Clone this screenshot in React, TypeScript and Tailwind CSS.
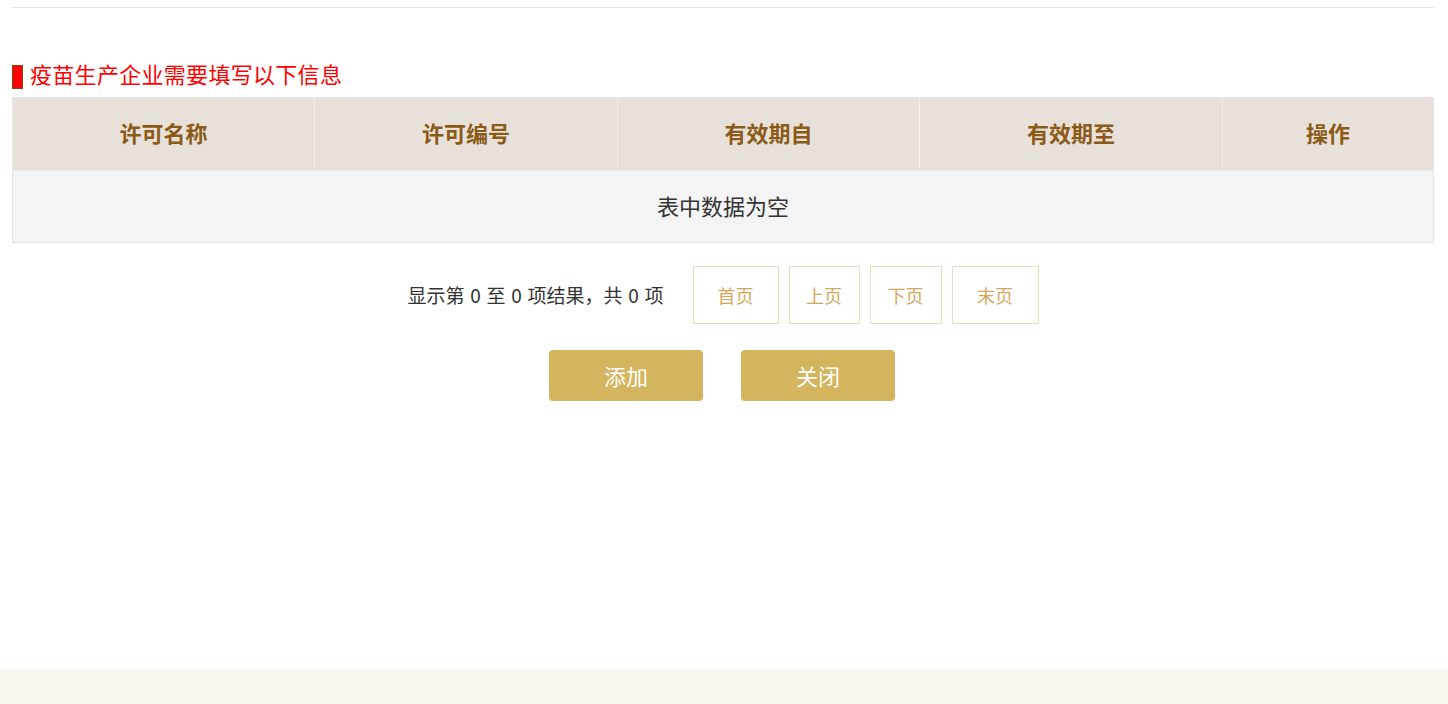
import React from "react";

const font = { fontFamily: '"Noto Sans CJK SC", "Noto Sans", sans-serif' };

export default function App() {
  const cols = [
    { label: "许可名称", w: "w-[302px]" },
    { label: "许可编号", w: "w-[303px]" },
    { label: "有效期自", w: "w-[302px]" },
    { label: "有效期至", w: "w-[303px]" },
    { label: "操作", w: "flex-1" },
  ];
  return (
    <div style={font} className="w-[1448px] h-[704px] bg-white flex flex-col">
      <div className="flex-1 pl-[12px] pr-[14px] pt-[7px]">
        <div className="border-t border-[#e5e5e5]" />
        <div className="mt-[57px] flex items-start h-[24px]">
          <div className="w-[11px] h-[24px] bg-[#ff0000] border border-[#8b4513]" />
          <span className="ml-[7px] -mt-[3px] text-[22px] leading-[22px] tracking-[0.3px] text-[#ff0000]">
            疫苗生产企业需要填写以下信息
          </span>
        </div>
        <div className="mt-[8px] border border-[#e6e6e6]">
          <div className="flex h-[72px] bg-[#e8e1da]">
            {cols.map((c, i) => (
              <div
                key={c.label}
                className={`${c.w} flex items-center justify-center pb-[3px] text-[22px] font-bold text-[#8b5a17] ${
                  i < cols.length - 1 ? "border-r border-[#f3efea]" : ""
                }`}
              >
                {c.label}
              </div>
            ))}
          </div>
          <div className="h-[72px] bg-[#f4f4f4] border-t border-[#ececec] flex items-center justify-center pb-[3px] text-[22px] text-[#333333]">
            表中数据为空
          </div>
        </div>
        <div className="mt-[23px] flex items-center justify-center">
          <span className="text-[19px] text-[#333333] mr-[29px] [word-spacing:1.5px]">
            显示第 0 至 0 项结果，共 0 项
          </span>
          <div className="flex gap-[10px]">
            {[
              ["首页", "w-[86px]"],
              ["上页", "w-[71px]"],
              ["下页", "w-[72px]"],
              ["末页", "w-[87px]"],
            ].map(([t, w]) => (
              <div
                key={t}
                className={`${w} h-[58px] border border-[#ecdab8] flex items-center justify-center text-[18px] text-[#d4a65c]`}
              >
                {t}
              </div>
            ))}
          </div>
        </div>
        <div className="mt-[26px] flex justify-center gap-[38px] pr-[2px]">
          <button className="w-[154px] h-[51px] rounded-[4px] bg-[#d4b55e] text-white text-[22px]">
            添加
          </button>
          <button className="w-[154px] h-[51px] rounded-[4px] bg-[#d4b55e] text-white text-[22px]">
            关闭
          </button>
        </div>
      </div>
      <div className="h-[35px] bg-[#f9f6ef]" />
    </div>
  );
}
